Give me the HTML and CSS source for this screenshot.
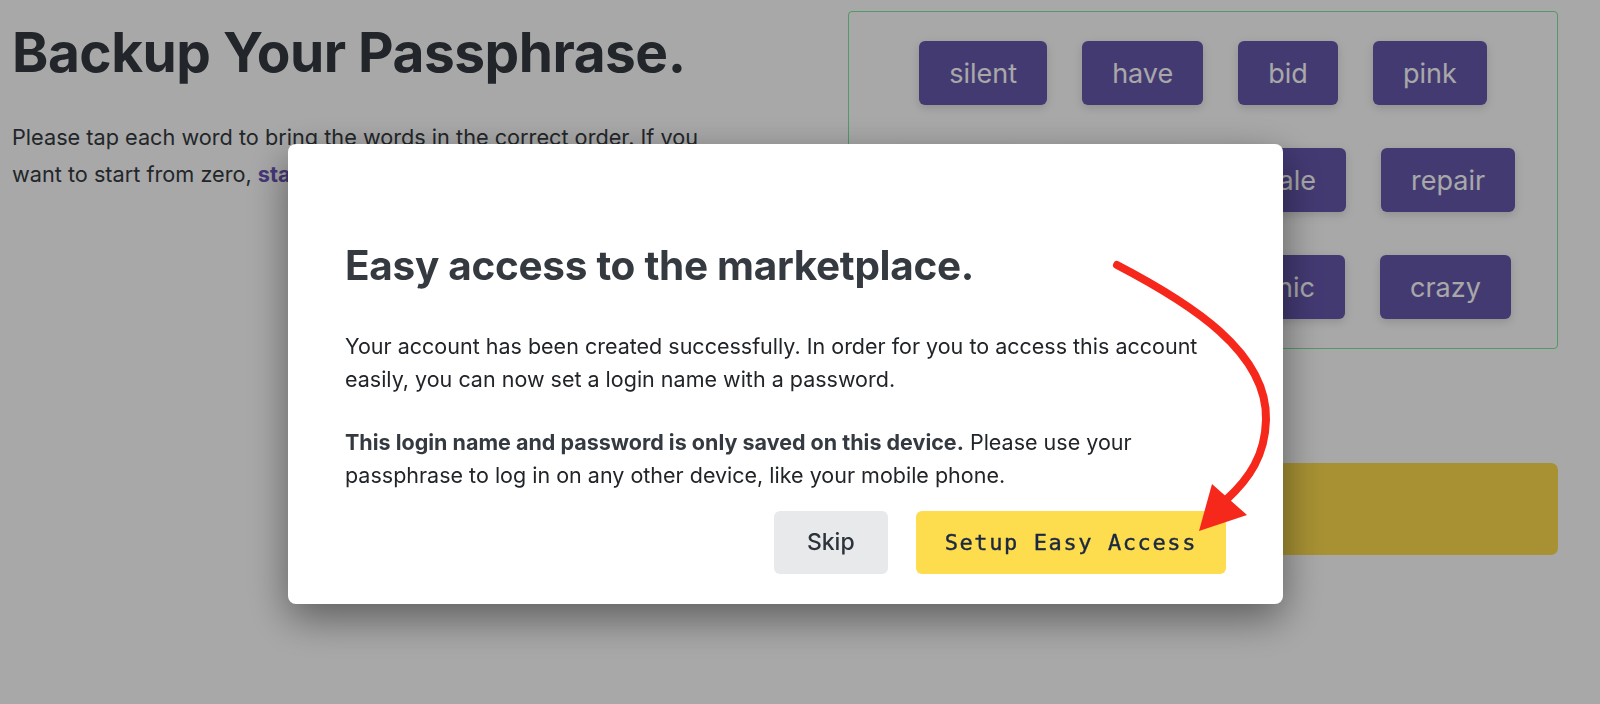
FILE: index.html
```html
<!DOCTYPE html>
<html lang="en">
<head>
<meta charset="utf-8">
<title>Backup Your Passphrase</title>
<link rel="stylesheet" href="styles.css">
</head>
<body>
<div class="page">
  <div class="left">
    <h1 class="title">Backup Your Passphrase.</h1>
    <p class="intro">Please tap each word to bring the words in the correct order. If you want to start from zero, <a class="link" href="#">start over</a>.</p>
  </div>
  <div class="right">
    <div class="words">
      <div class="word-row">
        <span class="chip">silent</span>
        <span class="chip">have</span>
        <span class="chip">bid</span>
        <span class="chip">pink</span>
      </div>
      <div class="word-row">
        <span class="chip">lunch</span>
        <span class="chip">mask</span>
        <span class="chip">scale</span>
        <span class="chip">repair</span>
      </div>
      <div class="word-row">
        <span class="chip">winter</span>
        <span class="chip">trust</span>
        <span class="chip">tonic</span>
        <span class="chip">crazy</span>
      </div>
    </div>
    <div class="continue"></div>
  </div>
</div>

<div class="overlay">
  <div class="modal">
    <h2 class="modal-title">Easy access to the marketplace.</h2>
    <p class="modal-text">Your account has been created successfully. In order for you to access this account easily, you can now set a login name with a password.</p>
    <p class="modal-text"><strong>This login name and password is only saved on this device.</strong> Please use your passphrase to log in on any other device, like your mobile phone.</p>
    <div class="modal-actions">
      <button class="btn btn-skip">Skip</button>
      <button class="btn btn-setup">Setup Easy Access</button>
    </div>
  </div>
</div>

<svg class="annotation" width="1600" height="704" viewBox="0 0 1600 704" aria-hidden="true">
  <path d="M1117 265 C1190 303 1268 352 1266 420 C1265 455 1250 478 1226 500" fill="none" stroke="#f6281c" stroke-width="8" stroke-linecap="round"/>
  <polygon points="1212,484 1247,515 1199,531" fill="#f6281c"/>
</svg>
</body>
</html>
```
FILE: styles.css
```css
* { box-sizing: border-box; }

html, body {
  margin: 0;
  padding: 0;
  width: 1600px;
  height: 704px;
  overflow: hidden;
  background: #ffffff;
  font-family: "Inter", "Noto Sans", sans-serif;
  color: #212529;
}

.page {
  display: flex;
  gap: 60px;
  padding: 11px 42px 0 12px;
}

.left {
  flex: 1;
  padding-top: 8px;
}

.title {
  margin: 0;
  font-size: 55px;
  line-height: 1.2;
  font-weight: 700;
  color: #343a40;
  letter-spacing: -0.5px;
}

.intro {
  margin: 34px 0 0;
  font-size: 21.7px;
  line-height: 37px;
  color: #343a40;
  max-width: 712px;
}

.link {
  color: #6a55b8;
  font-weight: 700;
  text-decoration: none;
}

.right {
  width: 710px;
  flex: none;
}

.words {
  border: 1px solid #7ee89a;
  border-radius: 4px;
  padding: 29px 20px 29px;
  display: flex;
  flex-direction: column;
  gap: 43px;
}

.word-row {
  display: flex;
  justify-content: center;
  gap: 35px;
}

.chip {
  display: inline-flex;
  align-items: center;
  justify-content: center;
  height: 64px;
  padding: 0 30px;
  background: #6658ae;
  color: #ffffff;
  border-radius: 6px;
  font-size: 27px;
  box-shadow: 0 3px 10px rgba(0, 0, 0, 0.15);
}

.continue {
  margin-top: 114px;
  height: 92px;
  background: #fddc4e;
  border-radius: 7px;
}

.overlay {
  position: fixed;
  inset: 0;
  background: rgba(0, 0, 0, 0.34);
  display: flex;
  align-items: flex-start;
}

.modal {
  margin: 144px 0 0 288px;
  width: 995px;
  background: #ffffff;
  border-radius: 8px;
  padding: 98px 57px 30px;
  box-shadow: 0 14px 40px rgba(0, 0, 0, 0.45);
}

.modal-title {
  margin: 0;
  font-size: 40.5px;
  line-height: 1.2;
  font-weight: 700;
  color: #343a40;
  letter-spacing: -0.3px;
}

.modal-text {
  margin: 39px 0 0;
  font-size: 21.5px;
  line-height: 33px;
  color: #212529;
}

.modal-text + .modal-text {
  margin-top: 30px;
}

.modal-text strong {
  font-weight: 700;
  color: #343a40;
}

.modal-actions {
  display: flex;
  justify-content: flex-end;
  gap: 28px;
  margin-top: 19px;
}

.btn {
  border: 0;
  height: 63px;
  border-radius: 6px;
  cursor: pointer;
}

.btn-skip {
  padding: 0 33px;
  background: #e8e9eb;
  color: #2c333b;
  font-family: "Inter", sans-serif;
  font-size: 23px;
  font-weight: 500;
}

.btn-setup {
  padding: 0 29px;
  background: #fddc4e;
  color: #1b2842;
  font-family: "DejaVu Sans Mono", monospace;
  font-size: 22px;
  letter-spacing: 1.6px;
  -webkit-text-stroke: 0.4px #1b2842;
}

.annotation {
  position: absolute;
  left: 0;
  top: 0;
  pointer-events: none;
}
```
